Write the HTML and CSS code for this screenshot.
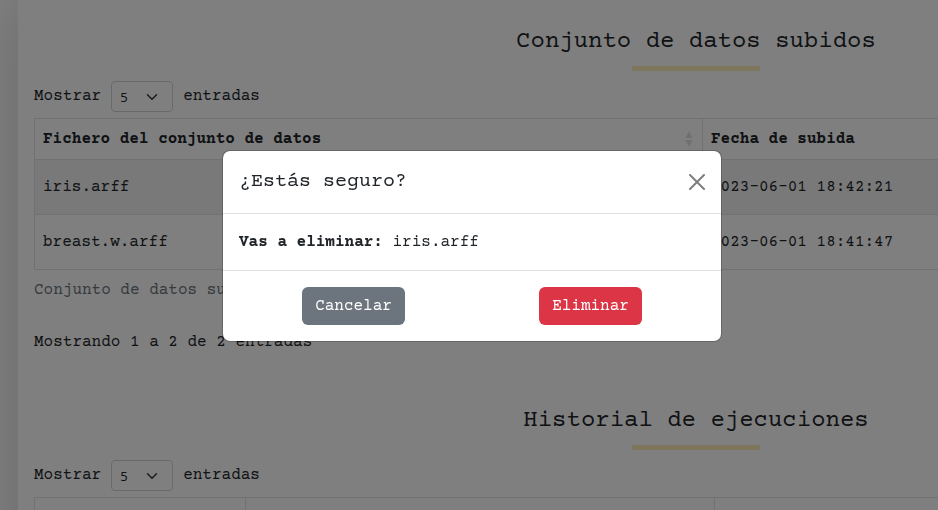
FILE: index.html
```html
<!DOCTYPE html>
<html lang="es">
<head>
<meta charset="utf-8">
<meta name="viewport" content="width=device-width, initial-scale=1">
<title>Conjunto de datos subidos</title>
<link rel="stylesheet" href="styles.css">
</head>
<body>
<main class="panel">
  <section class="block">
    <h2 class="block-title">Conjunto de datos subidos</h2>
    <hr class="rule">
    <label class="length">Mostrar
      <span class="select-wrap">
        <select class="select"><option>5</option><option>10</option></select>
        <svg class="chevron" viewBox="0 0 16 16" aria-hidden="true"><path d="m2 5 6 6 6-6"/></svg>
      </span>
      entradas
    </label>
    <table class="table">
      <caption>Conjunto de datos subidos</caption>
      <colgroup><col class="col-file"><col></colgroup>
      <thead>
        <tr>
          <th scope="col">
            <div class="sortable">Fichero del conjunto de datos
              <svg class="sort" viewBox="0 0 8 16" aria-hidden="true"><path d="M4 0 7.500 7H.5zM4 16 .5 9h7z"/></svg>
            </div>
          </th>
          <th scope="col">Fecha de subida</th>
        </tr>
      </thead>
      <tbody>
        <tr><td>iris.arff</td><td>2023-06-01 18:42:21</td></tr>
        <tr><td>breast.w.arff</td><td>2023-06-01 18:41:47</td></tr>
      </tbody>
    </table>
    <p class="info">Mostrando 1 a 2 de 2 entradas</p>
  </section>
  <section class="block">
    <h2 class="block-title">Historial de ejecuciones</h2>
    <hr class="rule">
    <label class="length">Mostrar
      <span class="select-wrap">
        <select class="select"><option>5</option><option>10</option></select>
        <svg class="chevron" viewBox="0 0 16 16" aria-hidden="true"><path d="m2 5 6 6 6-6"/></svg>
      </span>
      entradas
    </label>
    <table class="table">
      <colgroup><col class="col-algorithm"><col class="col-source"><col></colgroup>
      <thead><tr><th></th><th></th><th></th></tr></thead>
    </table>
  </section>
</main>
<div class="backdrop">
  <div class="modal" role="dialog" aria-modal="true" aria-labelledby="modal-title">
    <header class="modal-header">
      <h5 class="modal-title" id="modal-title">¿Estás seguro?</h5>
      <button class="close" type="button" aria-label="Cerrar">
        <svg viewBox="0 0 16 16" aria-hidden="true"><path d="M.293.293a1 1 0 0 1 1.414 0L8 6.586 14.293.293a1 1 0 1 1 1.414 1.414L9.414 8l6.293 6.293a1 1 0 0 1-1.414 1.414L8 9.414l-6.293 6.293a1 1 0 0 1-1.414-1.414L6.586 8 .293 1.707a1 1 0 0 1 0-1.414z"/></svg>
      </button>
    </header>
    <div class="modal-body"><strong>Vas a eliminar:</strong> iris.arff</div>
    <footer class="modal-footer">
      <button class="btn btn-secondary" type="button">Cancelar</button>
      <button class="btn btn-danger" type="button">Eliminar</button>
    </footer>
  </div>
</div>
</body>
</html>
```
FILE: styles.css
```css
*, *::before, *::after { box-sizing: border-box; }

body {
  margin: 0;
  overflow: hidden;
  background: #fff;
  color: #212529;
  font: 16px/24px "Courier Prime", "Liberation Mono", monospace;
}

.panel {
  min-width: 1356px;
  margin-left: 18px;
  padding: 27px 16px;
  background: #fff;
  box-shadow: 0 0 64px rgba(0, 0, 0, .175);
}

.block { margin-bottom: 52px; }

.block-title {
  margin: 0 0 10px;
  font-size: 24px;
  line-height: 29px;
  font-weight: 400;
  text-align: center;
}

.rule {
  width: 128px;
  height: 5px;
  margin: 0 auto 10px;
  border: 0;
  background: #fcecb4;
}

.length {
  display: flex;
  align-items: flex-start;
  gap: 10px;
  width: fit-content;
  margin-bottom: 6px;
  line-height: 30px;
}

.select-wrap { position: relative; display: flex; }

.select {
  width: 62px;
  height: 31px;
  padding: 4px 8px;
  appearance: none;
  border: 1px solid #ced4da;
  border-radius: 4px;
  background: #fff;
  color: inherit;
  font: 13px/20px "Noto Sans", sans-serif;
}

.chevron {
  position: absolute;
  top: 10px;
  right: 15px;
  width: 12px;
  height: 12px;
  fill: none;
  stroke: #343a40;
  stroke-width: 2;
  stroke-linecap: round;
  stroke-linejoin: round;
  pointer-events: none;
}

.table {
  width: 100%;
  table-layout: fixed;
  border-collapse: collapse;
}

.table caption {
  padding: 8px 0;
  caption-side: bottom;
  color: #6c757d;
  text-align: left;
}

.table th, .table td {
  border: 1px solid #dee2e6;
  text-align: left;
}

.table th { height: 41px; padding: 7px 8px 8px; }
.table td { padding: 15px 8px; }
.table tbody tr:nth-child(odd) { background: #f2f2f2; }

.col-file { width: 668px; }
.col-algorithm { width: 211px; }
.col-source { width: 469px; }

.sortable {
  display: flex;
  align-items: center;
  justify-content: space-between;
}

.sort { width: 8px; height: 16px; margin-right: 1px; fill: #e1e1e1; }

.info { margin: 20px 0 0; }

.backdrop {
  position: fixed;
  inset: 0;
  display: flex;
  align-items: center;
  justify-content: center;
  padding: 0 0 18px 6px;
  background: rgba(0, 0, 0, .5);
}

.modal {
  width: 100%;
  max-width: 500px;
  border: 1px solid rgba(0, 0, 0, .2);
  border-radius: 8px;
  background: #fff;
  background-clip: padding-box;
}

.modal-header {
  display: flex;
  align-items: center;
  justify-content: space-between;
  padding: 16px;
  border-bottom: 1px solid #dee2e6;
}

.modal-title {
  margin: 0;
  font-size: 20px;
  line-height: 30px;
  font-weight: 400;
}

.close {
  display: flex;
  padding: 0;
  border: 0;
  background: none;
  opacity: .5;
}

.close svg { width: 16px; height: 16px; }

.modal-body { padding: 16px; }

.modal-footer {
  display: flex;
  justify-content: space-around;
  padding: 12px;
  border-top: 1px solid #dee2e6;
}

.btn {
  margin: 4px;
  padding: 6px 12px;
  border: 1px solid transparent;
  border-radius: 6px;
  color: #fff;
  font: inherit;
}

.btn-secondary { background: #6c757d; }
.btn-danger { background: #dc3545; }
```
